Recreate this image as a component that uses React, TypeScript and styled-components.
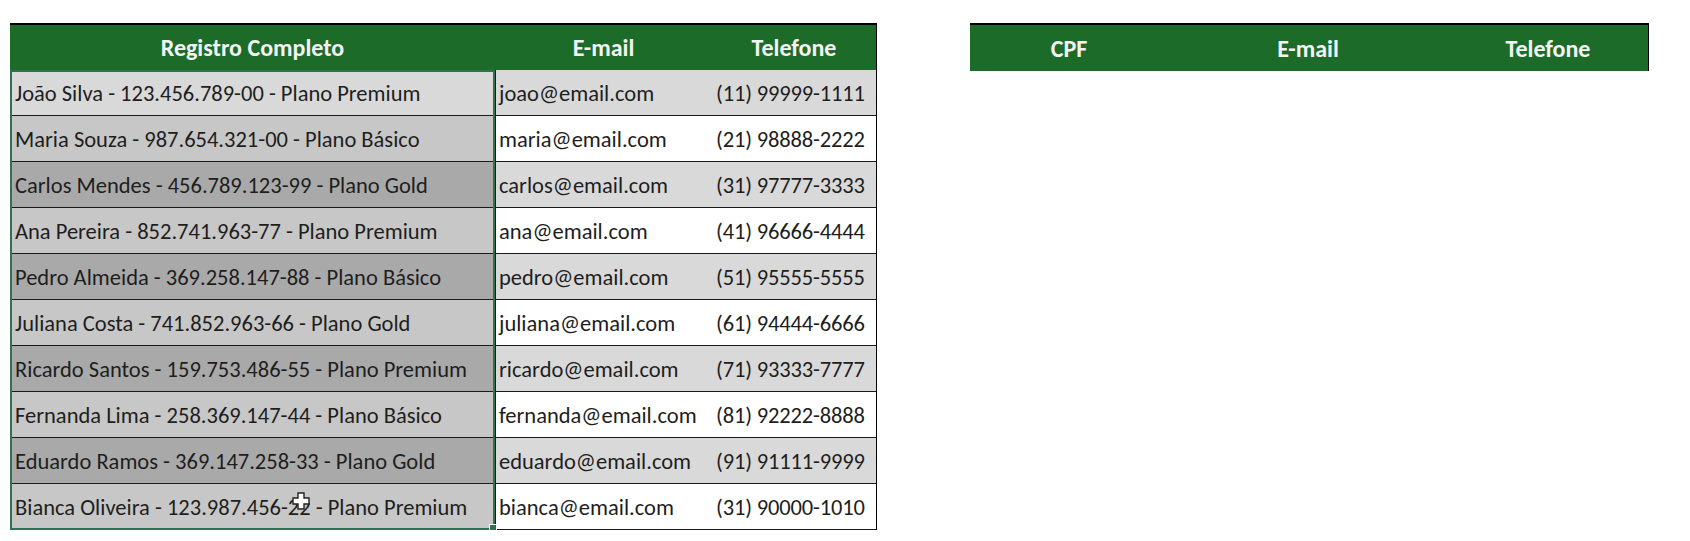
import React from "react";
import styled, { createGlobalStyle } from "styled-components";

const GlobalStyle = createGlobalStyle`
  html, body { margin: 0; padding: 0; background: #ffffff; }
  body { font-family: "Carlito", "Lato", "Liberation Sans", sans-serif; }
`;

const FONT = `"Carlito", "Lato", "Liberation Sans", sans-serif`;
const GREEN = "#1d6b29";
const SEL = "#2f7152";

const Page = styled.div`
  display: flex;
  align-items: flex-start;
  gap: 93px;
  padding: 23px 0 0 10px;
  font-family: ${FONT};
`;

const Sheet = styled.div<{ $cols: string; $width: number }>`
  width: ${(p) => p.$width}px;
  display: grid;
  grid-template-columns: ${(p) => p.$cols};
  border-top: 2px solid #000;
  border-right: 1px solid #000;
  box-sizing: border-box;
`;

const HeadCell = styled.div<{ $h: number }>`
  height: ${(p) => p.$h}px;
  background: ${GREEN};
  color: #f3f3f3;
  font-weight: 700;
  font-size: 24px;
  display: flex;
  align-items: center;
  justify-content: center;
`;

const Body = styled.div`
  position: relative;
  grid-column: 1 / -1;
  display: grid;
  grid-template-columns: inherit;
`;

const Row = styled.div`
  display: contents;
`;

const Cell = styled.div<{ $bg: string; $pad?: number }>`
  height: 46px;
  box-sizing: border-box;
  border-bottom: 1px solid #1a1a1a;
  background: ${(p) => p.$bg};
  color: #1e1e1e;
  font-size: 22.5px;
  white-space: nowrap;
  overflow: hidden;
  display: flex;
  align-items: center;
  padding-left: ${(p) => p.$pad ?? 4}px;
  padding-top: 1px;
`;

const EmailCell = styled(Cell)`
  border-left: 1px solid #1a1a1a;
`;

const PhoneCell = styled(Cell)`
  letter-spacing: -0.15px;
`;

const Selection = styled.div`
  position: absolute;
  left: 0;
  top: 0;
  width: 485px;
  bottom: 0;
  border: 2px solid ${SEL};
  box-sizing: border-box;
  pointer-events: none;
`;

const Handle = styled.div`
  position: absolute;
  right: -4px;
  bottom: -4px;
  width: 6px;
  height: 6px;
  background: ${SEL};
  border: 1px solid #fff;
`;

const Cursor = styled.svg`
  position: absolute;
  left: 282px;
  top: 422px;
  width: 18px;
  height: 18px;
`;

const rows = [
  ["João Silva - 123.456.789-00 - Plano Premium", "joao@email.com", "(11) 99999-1111"],
  ["Maria Souza - 987.654.321-00 - Plano Básico", "maria@email.com", "(21) 98888-2222"],
  ["Carlos Mendes - 456.789.123-99 - Plano Gold", "carlos@email.com", "(31) 97777-3333"],
  ["Ana Pereira - 852.741.963-77 - Plano Premium", "ana@email.com", "(41) 96666-4444"],
  ["Pedro Almeida - 369.258.147-88 - Plano Básico", "pedro@email.com", "(51) 95555-5555"],
  ["Juliana Costa - 741.852.963-66 - Plano Gold", "juliana@email.com", "(61) 94444-6666"],
  ["Ricardo Santos - 159.753.486-55 - Plano Premium", "ricardo@email.com", "(71) 93333-7777"],
  ["Fernanda Lima - 258.369.147-44 - Plano Básico", "fernanda@email.com", "(81) 92222-8888"],
  ["Eduardo Ramos - 369.147.258-33 - Plano Gold", "eduardo@email.com", "(91) 91111-9999"],
  ["Bianca Oliveira - 123.987.456-22 - Plano Premium", "bianca@email.com", "(31) 90000-1010"],
];

export default function App() {
  return (
    <>
      <GlobalStyle />
      <Page>
        <Sheet $cols="485px 217px 164px" $width={867}>
          <HeadCell $h={45}>Registro Completo</HeadCell>
          <HeadCell $h={45}>E-mail</HeadCell>
          <HeadCell $h={45}>Telefone</HeadCell>
          <Body>
            {rows.map((r, i) => {
              const banded = i % 2 === 0;
              const base = banded ? "#d9d9d9" : "#ffffff";
              const selBg = i === 0 ? "#d9d9d9" : banded ? "#a9a9a9" : "#c7c7c7";
              return (
                <Row key={i}>
                  <Cell $bg={selBg} $pad={5}>{r[0]}</Cell>
                  <EmailCell $bg={base} $pad={3}>{r[1]}</EmailCell>
                  <PhoneCell $bg={base} $pad={4}>{r[2]}</PhoneCell>
                </Row>
              );
            })}
            <Selection>
              <Handle />
            </Selection>
            <Cursor viewBox="0 0 18 18">
              <path
                d="M6 1 H12 V6 H17 V12 H12 V17 H6 V12 H1 V6 H6 Z"
                fill="#ffffff"
                stroke="#222"
                strokeWidth="1.4"
                strokeLinejoin="miter"
              />
            </Cursor>
          </Body>
        </Sheet>
        <Sheet $cols="198px 280px 200px" $width={679}>
          <HeadCell $h={46}>CPF</HeadCell>
          <HeadCell $h={46}>E-mail</HeadCell>
          <HeadCell $h={46}>Telefone</HeadCell>
        </Sheet>
      </Page>
    </>
  );
}
